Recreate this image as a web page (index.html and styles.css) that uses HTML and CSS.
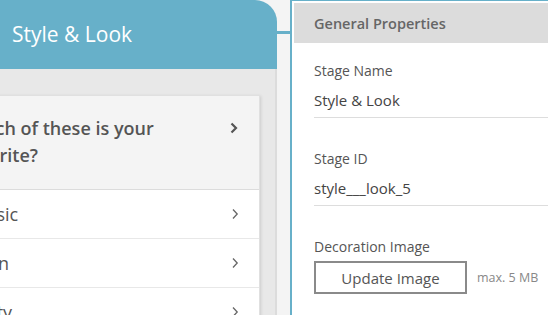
FILE: index.html
```html
<!DOCTYPE html>
<html>
<head>
	<meta http-equiv="Content-Type" content="text/html; charset=UTF-8">
	<title>Stage editor</title>
	<link rel="stylesheet" href="styles.css">
</head>
<body>
<div class="stage">
	<div class="stage-head">Style &amp; Look</div>
	<div class="stage-body">
		<div class="card">
			<div class="card-title">
				<span>Which of these is your favorite?</span>
				<svg class="chev-bold" width="8" height="12" viewBox="0 0 8 12"><polyline points="1.5,1.5 6,6 1.5,10.5" fill="none" stroke="#555" stroke-width="2.2"/></svg>
			</div>
			<div class="option"><span>Classic</span><svg class="chev" width="8" height="12" viewBox="0 0 8 12"><polyline points="2,1.5 6.2,6 2,10.5" fill="none" stroke="#666" stroke-width="1.3"/></svg></div>
			<div class="option"><span>Clean</span><svg class="chev" width="8" height="12" viewBox="0 0 8 12"><polyline points="2,1.5 6.2,6 2,10.5" fill="none" stroke="#666" stroke-width="1.3"/></svg></div>
			<div class="option"><span>Pretty</span><svg class="chev" width="8" height="12" viewBox="0 0 8 12"><polyline points="2,1.5 6.2,6 2,10.5" fill="none" stroke="#666" stroke-width="1.3"/></svg></div>
		</div>
	</div>
</div>
<div class="link"></div>
<div class="props">
	<div class="props-head">General Properties</div>
	<div class="props-body">
		<div class="field">
			<div class="label">Stage Name</div>
			<div class="value">Style &amp; Look</div>
		</div>
		<div class="field">
			<div class="label">Stage ID</div>
			<div class="value">style___look_5</div>
		</div>
		<div class="field">
			<div class="label">Decoration Image</div>
			<div class="upload">
				<button class="btn">Update Image</button>
				<span class="hint">max. 5 MB</span>
			</div>
		</div>
	</div>
</div>
</body>
</html>
```

FILE: styles.css
```css
body {
	margin: 0;
	height: 315px;
	overflow: hidden;
	background: #f4f4f4;
	font-family: "Open Sans", "Liberation Sans", sans-serif;
	display: flex;
	align-items: flex-start;
}
.stage {
	width: 352px;
	margin-left: -75px;
	flex-shrink: 0;
}
.stage-head {
	height: 69px;
	background: #67b0c9;
	color: #fff;
	font-size: 21px;
	line-height: 69px;
	padding-left: 87px;
	border-top-right-radius: 22px;
	box-sizing: border-box;
	padding-bottom: 2px;
}
.stage-body {
	background: #e8e8e8;
	border-right: 2px solid #dcdcdc;
	padding: 26px 15px 0 15px;
	height: 300px;
}
.card {
	background: #fff;
	border: 1px solid #e0e0e0;
	box-shadow: 1px 1px 3px rgba(0,0,0,0.12);
}
.card-title {
	background: #f4f4f4;
	border-bottom: 1px solid #dcdcdc;
	padding: 19px 21px 20px 21px;
	display: flex;
	align-items: flex-start;
	gap: 18px;
	font-size: 18px;
	font-weight: 600;
	line-height: 27px;
	color: #555;
}
.card-title span { flex: 1; }
.chev-bold { margin-top: 7px; }
.option {
	height: 48px;
	border-bottom: 1px solid #e8e8e8;
	padding: 0 20px 0 21px;
	display: flex;
	align-items: center;
	justify-content: space-between;
	font-size: 18px;
	color: #555;
}
.link {
	width: 13px;
	height: 3px;
	margin-top: 31px;
	background: #67b0c9;
	flex-shrink: 0;
}
.props {
	width: 300px;
	flex-shrink: 0;
	margin-top: -1px;
	border: 2px solid #67b0c9;
	padding: 2px;
	background: #fff;
	height: 330px;
}
.props-head {
	height: 40px;
	background: #dcdcdc;
	color: #666;
	font-size: 14.5px;
	font-weight: 600;
	line-height: 42px;
	padding-left: 20px;
	box-sizing: border-box;
}
.props-body {
	padding: 18px 0 0 20px;
}
.field { margin-bottom: 31px; }
.label {
	font-size: 14px;
	line-height: 20px;
	color: #555;
}
.value {
	margin-top: 7px;
	font-size: 15px;
	line-height: 24px;
	padding-bottom: 5px;
	border-bottom: 1px solid #dddddd;
	color: #444;
}
.upload {
	margin-top: 4px;
	display: flex;
	align-items: center;
}
.btn {
	width: 153px;
	height: 33px;
	border: 2px solid #8a8a8a;
	background: #fff;
	font-family: "Open Sans", "Liberation Sans", sans-serif;
	font-size: 15px;
	color: #555;
	padding: 0;
}
.hint {
	margin-left: 10px;
	font-size: 12.5px;
	color: #888;
}
```
